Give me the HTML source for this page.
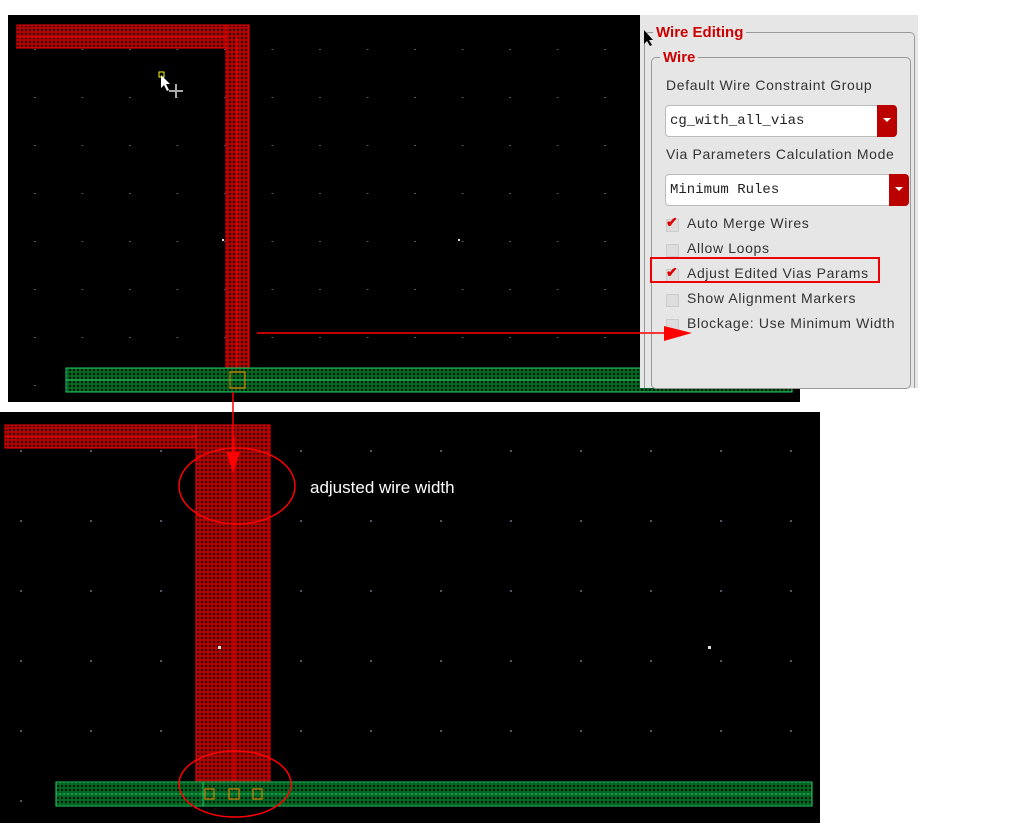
<!DOCTYPE html>
<html><head><meta charset="utf-8"><style>
body{margin:0;width:1013px;height:826px;background:#fff;position:relative;overflow:hidden;font-family:"Liberation Sans",sans-serif}
.p{position:absolute}
.panel{left:640px;top:15px;width:278px;height:373px;background:#e6e6e6}
.lbl{position:absolute;font-size:14px;color:#333;letter-spacing:.65px}
.sel{position:absolute;background:#fff;border:1px solid #bbb;border-radius:4px;font-family:"Liberation Mono",monospace;font-size:14px;color:#222;padding-left:4px;box-sizing:border-box;line-height:30px}
.sel b{position:absolute;right:-1px;top:-1px;width:20px;bottom:-1px;background:#b00;border-radius:0 4px 4px 0}
.sel b:after{content:"";position:absolute;left:6px;top:13px;border:4px solid transparent;border-top:4px solid #fff}
.cb{position:absolute;width:11px;height:11px;background:#ddd;border:1px solid #ccc}
.ck{position:absolute;color:#d00;font-size:14px;font-weight:bold;left:-1px;top:-6px}
</style></head><body>
<svg class="p" style="left:0;top:0" width="1013" height="826">
<defs>
<pattern id="rd" width="4" height="4" patternUnits="userSpaceOnUse"><rect width="4" height="4" fill="#b00000"/><rect x="1" y="1" width="2" height="2" fill="#200"/></pattern>
<pattern id="gd" width="4" height="4" patternUnits="userSpaceOnUse"><rect width="4" height="4" fill="#062"/><rect x="1" y="1" width="2" height="2" fill="#010"/></pattern>
<pattern id="dt1" x="11" y="2" width="47.5" height="48" patternUnits="userSpaceOnUse"><rect x="23" y="47" width="2" height="2" fill="#556"/></pattern>
<pattern id="dt2" x="0" y="0" width="70" height="70" patternUnits="userSpaceOnUse"><rect x="20" y="30" width="2" height="2" fill="#556"/></pattern>
</defs>
<rect x="8" y="15" width="792" height="387" fill="#000"/>
<rect x="8" y="15" width="792" height="387" fill="url(#dt1)"/>
<rect x="0" y="412" width="820" height="411" fill="#000"/>
<rect x="0" y="412" width="820" height="411" fill="url(#dt2)"/>
<!-- top -->
<rect x="17" y="25" width="232" height="23" fill="url(#rd)" stroke="#f00"/>
<line x1="17" y1="37" x2="237" y2="37" stroke="#f00"/>
<rect x="226" y="25" width="23" height="367" fill="url(#rd)" stroke="#f00"/>
<line x1="237" y1="37" x2="237" y2="392" stroke="#f00"/>
<rect x="66" y="368" width="726" height="24" fill="url(#gd)" stroke="#2c6"/>
<line x1="66" y1="380" x2="792" y2="380" stroke="#2c6"/>
<rect x="230" y="372" width="15" height="16" fill="none" stroke="#f80"/>
<rect x="159" y="72" width="5" height="5" fill="none" stroke="#ff0"/>
<path d="M161 75 L161 88 L164 85 L167 91 L169 90 L166 84 L170 84 Z" fill="#fff"/>
<path d="M176 84 v14 M169 91 h14" stroke="#aaa" stroke-width="2"/>
<rect x="222" y="239" width="2" height="2" fill="#ddd"/><rect x="458" y="239" width="2" height="2" fill="#ddd"/>
<!-- bottom -->
<rect x="5" y="425" width="265" height="23" fill="url(#rd)" stroke="#f00"/>
<line x1="5" y1="437" x2="234" y2="437" stroke="#f00"/>
<rect x="196" y="425" width="74" height="381" fill="url(#rd)" stroke="#f00"/>
<line x1="234" y1="437" x2="234" y2="806" stroke="#f00"/>
<rect x="56" y="782" width="756" height="24" fill="url(#gd)" stroke="#2c6"/>
<line x1="56" y1="794" x2="812" y2="794" stroke="#2c6"/>
<line x1="203" y1="782" x2="203" y2="806" stroke="#2c6"/>
<rect x="205" y="789" width="9" height="10" fill="none" stroke="#f80"/>
<rect x="229" y="789" width="10" height="10" fill="none" stroke="#f80"/>
<rect x="253" y="789" width="9" height="10" fill="none" stroke="#f80"/>
<rect x="218" y="646" width="3" height="3" fill="#ddd"/><rect x="708" y="646" width="3" height="3" fill="#ddd"/>
<ellipse cx="237" cy="486" rx="58" ry="38" fill="none" stroke="#f00" stroke-width="1.5"/>
<ellipse cx="235" cy="784" rx="56" ry="33" fill="none" stroke="#f00" stroke-width="1.5"/>
<text x="310" y="493" fill="#fff" font-size="17" font-family="Liberation Sans">adjusted wire width</text>
<!-- arrows -->
<line x1="233" y1="392" x2="233" y2="455" stroke="#f00" stroke-width="1.5"/>
<path d="M226 452 L240 452 L233 473 Z" fill="#f00"/>
</svg>
<div class="p panel">
<div style="position:absolute;left:4px;top:17px;right:3px;bottom:0;border:1px solid #999;border-bottom:none;border-radius:5px 5px 0 0"></div>
<div style="position:absolute;left:13px;top:9px;background:#e6e6e6;color:#c00;font-weight:bold;font-size:15px;padding:0 3px">Wire Editing</div>
<div style="position:absolute;left:11px;top:42px;width:258px;height:330px;border:1px solid #999;border-radius:5px"></div>
<div style="position:absolute;left:20px;top:34px;background:#e6e6e6;color:#c00;font-weight:bold;font-size:15px;padding:0 3px">Wire</div>
<div class="lbl" style="left:26px;top:62px">Default Wire Constraint Group</div>
<div class="sel" style="left:25px;top:90px;width:232px;height:32px">cg_with_all_vias<b></b></div>
<div class="lbl" style="left:26px;top:131px">Via Parameters Calculation Mode</div>
<div class="sel" style="left:25px;top:159px;width:244px;height:32px">Minimum Rules<b></b></div>
<div class="cb" style="left:26px;top:204px"><span class="ck">✔</span></div><div class="lbl" style="left:47px;top:200px">Auto Merge Wires</div>
<div class="cb" style="left:26px;top:229px"></div><div class="lbl" style="left:47px;top:225px">Allow Loops</div>
<div class="cb" style="left:26px;top:254px"><span class="ck">✔</span></div><div class="lbl" style="left:47px;top:250px">Adjust Edited Vias Params</div>
<div style="position:absolute;left:10px;top:242px;width:230px;height:26px;border:2px solid #e00;box-sizing:border-box"></div>
<div class="cb" style="left:26px;top:279px"></div><div class="lbl" style="left:47px;top:275px">Show Alignment Markers</div>
<div class="cb" style="left:26px;top:304px"></div><div class="lbl" style="left:47px;top:300px">Blockage: Use Minimum Width</div>
<svg style="position:absolute;left:3px;top:14px" width="12" height="18"><path d="M1 1 L1 15 L4 12 L7 17 L9 16 L6 11 L10 11 Z" fill="#000"/></svg>
</div>
<svg class="p" style="left:0;top:0" width="1013" height="826"><line x1="257" y1="333" x2="670" y2="333" stroke="#f00" stroke-width="1.5"/><path d="M664 326 L692 333 L664 341 Z" fill="#f00"/></svg>
</body></html>
